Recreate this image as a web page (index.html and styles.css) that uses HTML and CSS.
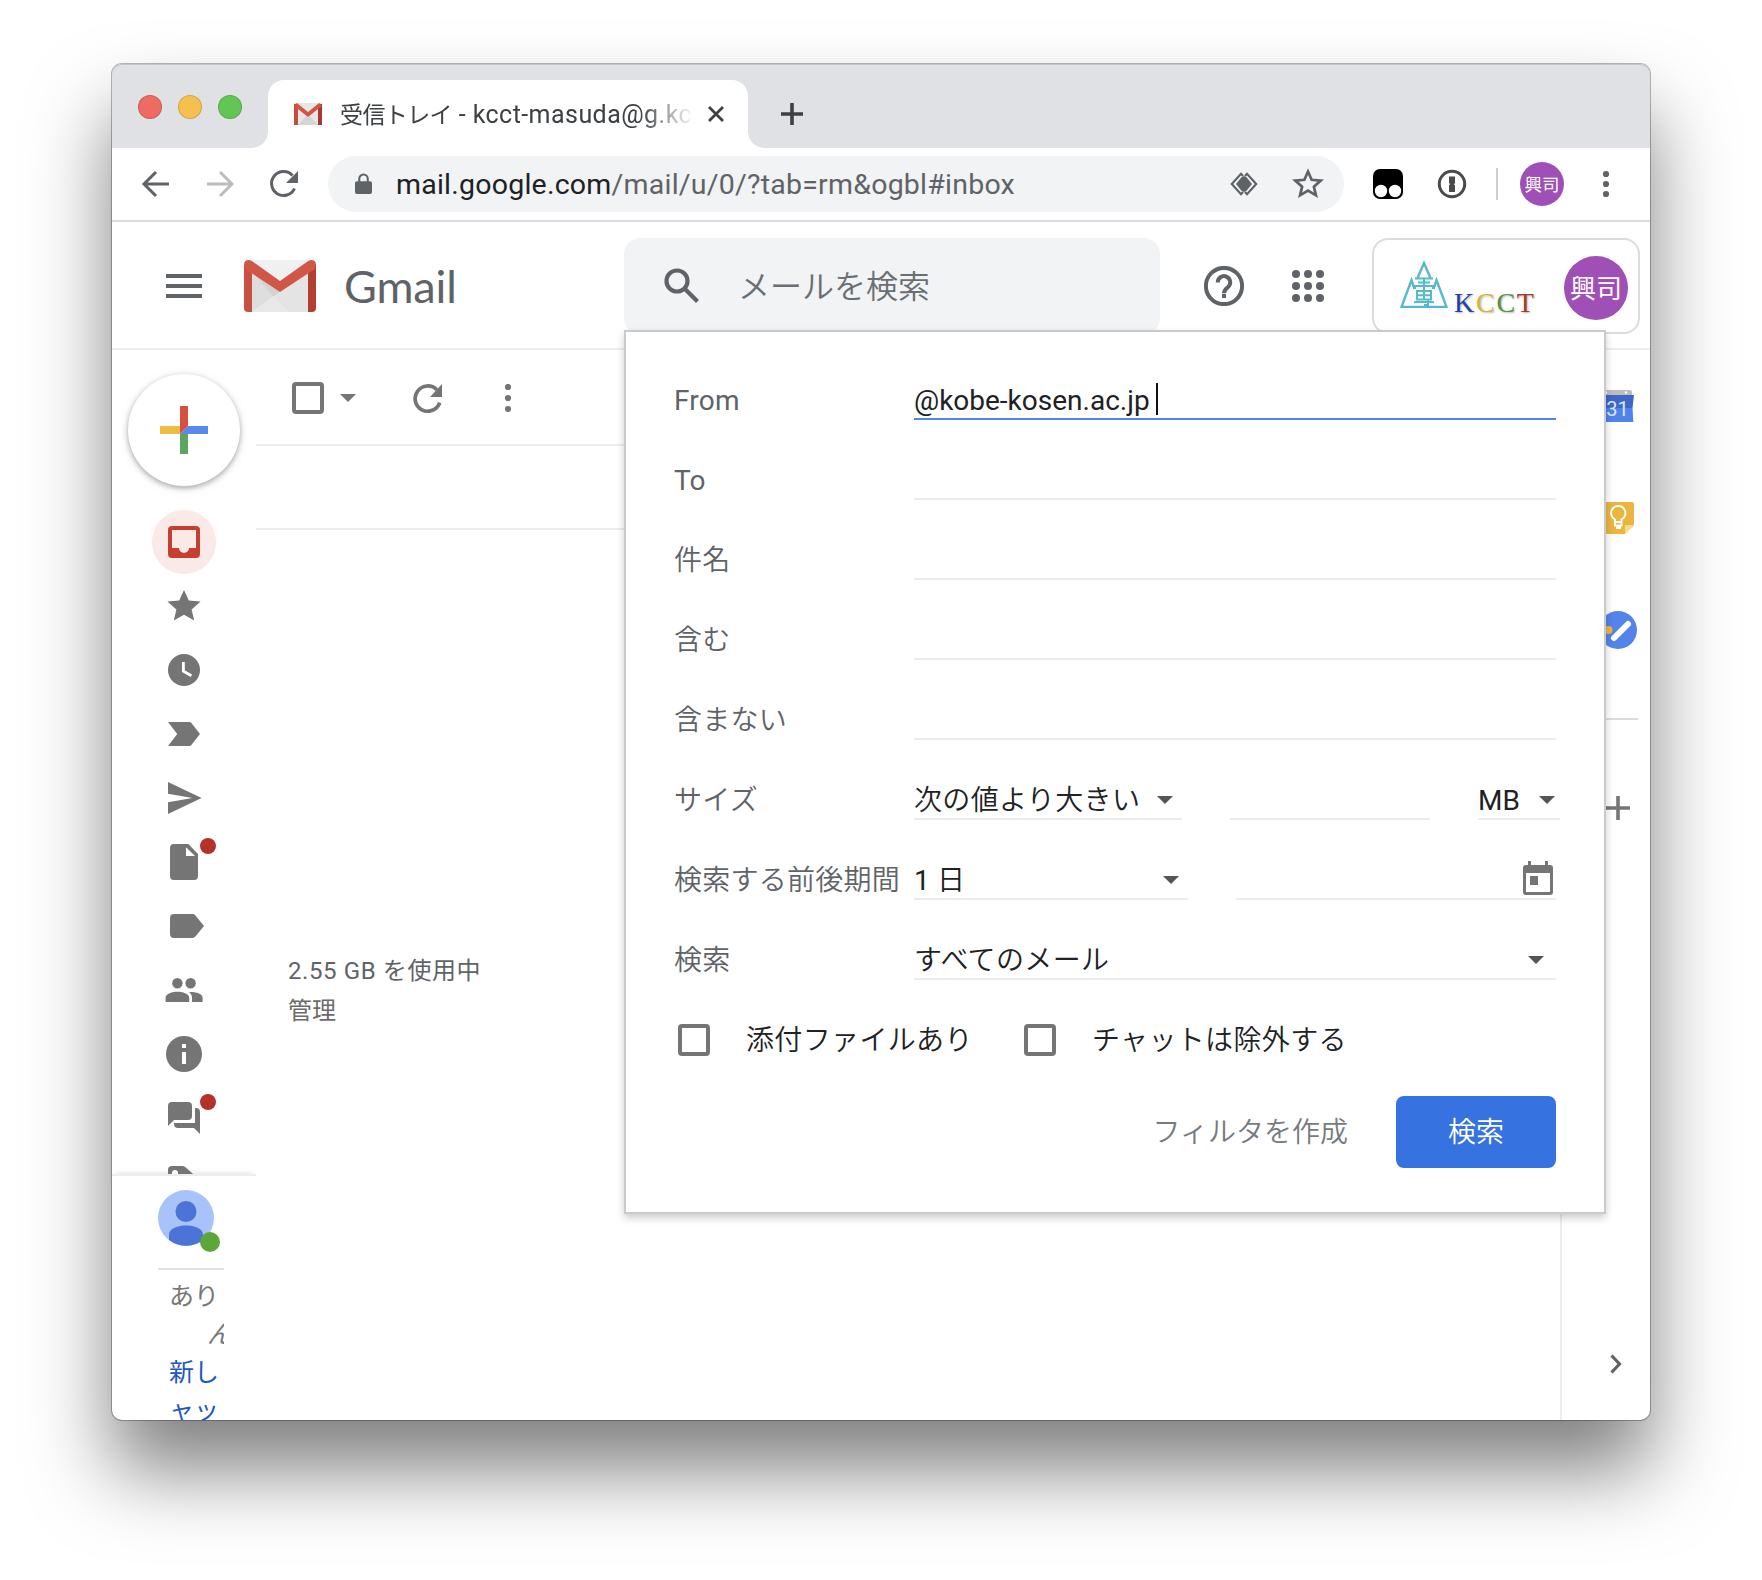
FILE: index.html
```html
<!DOCTYPE html>
<html lang="ja">
<head>
<meta charset="utf-8">
<title>受信トレイ - Gmail</title>
<link rel="stylesheet" href="styles.css">
</head>
<body>
<div class="window">
  <div class="tabstrip">
    <div class="lights"><span class="light red"></span><span class="light yellow"></span><span class="light green"></span></div>
    <div class="tab">
      <svg class="favicon" viewBox="0 0 28 22"><path fill="#e6e6e6" d="M0 0h28v22H0z"/><path fill="#d5d5d5" d="M4 22 14 11l10 11z"/><path fill="#c54d3f" d="M0 1h4v21H0z"/><path fill="#a63a2e" d="M24 1h4v21h-4z"/><path fill="none" stroke="#d35446" stroke-width="4" d="M1.500 1.500 14 11.500 26.500 1.500"/></svg>
      <span class="tab-title"><span class="ja">受信トレイ</span> - kcct-masuda@g.kc</span>
      <svg class="tab-close" viewBox="0 0 18 18"><path d="M2 2l14 14M16 2 2 16"/></svg>
    </div>
    <svg class="new-tab" viewBox="0 0 24 24"><path d="M12 1v22M1 12h22"/></svg>
  </div>
  <div class="toolbar">
    <svg class="nav" viewBox="0 0 32 32"><path d="M29 16H5M16 4 4 16l12 12"/></svg>
    <svg class="nav off" viewBox="0 0 32 32"><path d="M3 16h24M16 4l12 12-12 12"/></svg>
    <svg class="nav" viewBox="0 0 32 32"><path d="M26.500 20.500A12 12 0 1 1 24.500 7.500"/><path class="solid" d="M30 3v12H18z"/></svg>
    <div class="omnibox">
      <svg class="lock" viewBox="0 0 18 24"><path fill="#5f6368" d="M2 8.500h14q2 0 2 2V20q0 2-2 2H2q-2 0-2-2v-9.500q0-2 2-2z"/><path fill="none" stroke="#5f6368" stroke-width="2.200" d="M4.500 9V6a4.500 4.500 0 0 1 9 0v3"/></svg>
      <span class="url">mail.google.com<span class="path">/mail/u/0/?tab=rm&amp;ogbl#inbox</span></span>
      <svg class="diamond" viewBox="0 0 28 24"><path fill="none" stroke="#5f6368" stroke-width="2.200" d="m13 4-2-2.200L1.800 12l9.200 10.200 2-2.200M15 4l2-2.200L26.200 12 17 22.200 15 20"/><path fill="#5f6368" d="M11.500 5.200 14 4l2.500 1.200L22 12l-5.500 6.800L14 20l-2.500-1.200L6 12z"/></svg>
      <svg class="bookmark" viewBox="0 0 30 30"><path d="m15 4 3.200 7.300 8 .7-6 5.300 1.800 7.700-7-4.100L8 25l1.800-7.700-6-5.300 8-.7z"/></svg>
    </div>
    <svg class="ext-a" viewBox="0 0 30 30"><rect width="30" height="30" rx="7"/><circle cx="8" cy="22" r="6.200" fill="#fff"/><circle cx="22" cy="22" r="6.200" fill="#fff"/></svg>
    <svg class="ext-b" viewBox="0 0 30 30"><circle cx="15" cy="15" r="12.700" fill="none" stroke="#4a4a4a" stroke-width="3"/><path fill="#4a4a4a" d="M12 7.500h6V14l-1 1.500 1 1V23h-6v-6.500l1-1.500-1-1z"/></svg>
    <span class="divider"></span>
    <span class="avatar small">興司</span>
    <svg class="dots" viewBox="0 0 8 28"><circle cx="4" cy="4" r="3.100"/><circle cx="4" cy="14" r="3.100"/><circle cx="4" cy="24" r="3.100"/></svg>
  </div>

  <div class="app">
    <header class="header">
      <div class="burger"><i></i><i></i><i></i></div>
      <svg class="logo" viewBox="0 0 72 52"><path fill="#f0f0f0" d="M4 0h64v52H4z"/><path fill="#dedede" d="M8 12 30 36 8 52z"/><path fill="#d2d2d2" d="m8 12 28 20-6 5z"/><path fill="#e9e9e9" d="m8 52 22-16 15 16z"/><path fill="#e4e4e4" d="m36 32 28-20v40H45L30 36z"/><path fill="#c65143" d="M0 5h8v47H4q-4 0-4-4z"/><path fill="#b23f30" d="M64 5h8v43q0 4-4 4h-4z"/><path fill="#d15647" d="M0 5Q0 0 5 0q2 0 3.500 1.500L36 21 63.500 1.500Q65 0 67 0q5 0 5 5 0 3-2 4.500L36 32 2 9.500Q0 8 0 5z"/></svg>
      <span class="brand">Gmail</span>
      <div class="searchbox">
        <svg viewBox="0 0 36 36"><circle cx="13" cy="13" r="10.500"/><path d="m20.500 20.500 13 13"/></svg>
        <span class="ja">メールを検索</span>
      </div>
      <svg class="help" viewBox="0 0 40 40"><circle cx="20" cy="20" r="18.100"/><path d="M13.800 16.500a6.200 6.200 0 1 1 10.500 4.300C21.600 23 20 24 20 27.200"/><path d="M20 28v4"/></svg>
      <svg class="apps" viewBox="0 0 32 32"><circle cx="4" cy="4" r="4"/><circle cx="16" cy="4" r="4"/><circle cx="28" cy="4" r="4"/><circle cx="4" cy="16" r="4"/><circle cx="16" cy="16" r="4"/><circle cx="28" cy="16" r="4"/><circle cx="4" cy="28" r="4"/><circle cx="16" cy="28" r="4"/><circle cx="28" cy="28" r="4"/></svg>
      <div class="account">
        <svg class="school" viewBox="0 0 48 48"><path d="M17.500 18 24 3l6.500 15M14.500 29 11.500 20 1.500 47h45l-10-27-3 9"/><path class="mark" d="M15 18.500h18M18 22.500h12M15 29v-3h18v3M17 31h14v8.500H17zM24 19v21M17 35.200h14M14 42h20M28 40v5h-4"/></svg>
        <span class="kcct"><b class="k1">K</b><b class="k2">C</b><b class="k3">C</b><b class="k4">T</b></span>
        <span class="avatar large">興司</span>
      </div>
    </header>

    <div class="content">
      <nav class="rail">
        <div class="compose"><svg viewBox="0 0 48 48"><path fill="#edbd43" d="M0 20h20v8H0z"/><path fill="#5a88ed" d="M20 28l8-8h20v8z"/><path fill="#5ba55e" d="M20 28h8v20h-8z"/><path fill="#d5513f" d="M20 0h8v20l-8 8z"/></svg></div>
        <div class="labels">
          <div class="item active"><svg viewBox="0 0 20 20"><path fill-rule="evenodd" d="M4 2h12a2 2 0 0 1 2 2v12a2 2 0 0 1-2 2H4a2 2 0 0 1-2-2V4a2 2 0 0 1 2-2zm0 2v9h3.500a2.500 2.500 0 0 0 5 0H16V4z"/></svg></div>
          <div class="item"><svg viewBox="0 0 20 20"><path d="m10 2 2.400 5.300 5.900.4-4.500 4 1.300 5.600-5.100-2.900-5.100 2.900 1.300-5.600-4.500-4 5.900-.4z"/></svg></div>
          <div class="item"><svg viewBox="0 0 20 20"><circle cx="10" cy="10" r="8"/><path fill="none" stroke="#fff" stroke-width="1.400" d="M9.700 6v4.600l4 2.300"/></svg></div>
          <div class="item"><svg viewBox="0 0 20 20"><path d="M2 4h10.600q.7 0 1.100.5L18 10l-4.300 5.500q-.4.500-1.100.5H2l4.600-6z"/></svg></div>
          <div class="item"><svg viewBox="0 0 20 20"><path d="m2 2 16.800 8L2 18v-5.900L14.200 10 2 7.900z"/></svg></div>
          <div class="item"><svg viewBox="0 0 20 20"><path d="M5 1h7.200L17 6v11a2 2 0 0 1-2 2H5a2 2 0 0 1-2-2V3a2 2 0 0 1 2-2z"/><path fill="#fff" d="M11 2.600V7h4.500z"/></svg><span class="dot"></span></div>
          <div class="item"><svg viewBox="0 0 20 20"><path d="M5 4h9.300q.9 0 1.400.7L20 10l-4.300 5.300q-.5.700-1.400.7H5a2 2 0 0 1-2-2V6a2 2 0 0 1 2-2z"/></svg></div>
          <div class="item"><svg viewBox="0 0 20 20"><circle cx="6.700" cy="6.600" r="2.600"/><circle cx="13.300" cy="6.600" r="2.600"/><path d="M.8 16v-2.200c0-2 3.500-2.900 5.900-2.900s5.900.9 5.900 2.900V16zM14 16v-2.200c0-1.200-.6-2.100-1.500-2.800 3-.3 6.800.8 6.800 2.800V16z"/></svg></div>
          <div class="item"><svg viewBox="0 0 20 20"><circle cx="10" cy="10" r="9"/><path fill="#fff" d="M9 5h2v2H9zM9 9h2v6H9z"/></svg></div>
          <div class="item"><svg viewBox="0 0 20 20"><path d="M4 2h8a2 2 0 0 1 2 2v5a2 2 0 0 1-2 2H5l-3 3V4a2 2 0 0 1 2-2z"/><path d="M15.500 5h.5a2 2 0 0 1 2 2v11l-3-3H7a2 2 0 0 1-2-2v-.5h10.500z"/></svg><span class="dot"></span></div>
          <div class="item"><svg viewBox="0 0 20 20"><path d="M4 2h5.200q.8 0 1.400.5L18 9l-8 9-8-8V4a2 2 0 0 1 2-2z"/><circle cx="5.500" cy="5.500" r="1.500" fill="#fff"/></svg></div>
        </div>
        <div class="hangouts">
          <div class="presence">
            <svg viewBox="0 0 56 56"><circle cx="28" cy="28" r="28" fill="#a8c3fa"/><circle cx="28" cy="21.500" r="10.500" fill="#4c73d6"/><path fill="#4c73d6" d="M11 50V45c0-7 9-9.500 17-9.500S45 38 45 45v5a28 28 0 0 1-34 0z"/></svg>
            <span class="online"></span>
          </div>
          <div class="chat">
            <p>あり</p>
            <p class="cut">ん</p>
            <p class="link">新し</p>
            <p class="link">ャッ</p>
          </div>
        </div>
      </nav>

      <main class="main">
        <div class="actions">
          <span class="check"></span>
          <span class="caret grey"></span>
          <svg class="refresh" viewBox="0 0 28 28"><path fill="none" stroke="#757575" stroke-width="3.600" d="M25.800 18A12.200 12.200 0 1 1 23 5.600"/><path fill="#757575" d="M28 0v12.500H16.500z"/></svg>
          <svg class="more" viewBox="0 0 8 28"><circle cx="4" cy="3" r="3.100"/><circle cx="4" cy="14" r="3.100"/><circle cx="4" cy="25" r="3.100"/></svg>
        </div>
        <div class="blank"></div>
        <div class="usage"><p>2.55 GB <span class="ja">を使用中</span></p><p class="manage ja">管理</p></div>
      </main>

      <aside class="side">
        <svg class="cal" viewBox="0 0 32 32"><path fill="#bdbdbd" d="M2 0h26q2 0 2 2v4H0V2q0-2 2-2z"/><circle cx="4" cy="2.500" r="1.200" fill="#fff"/><circle cx="24" cy="2.500" r="1.200" fill="#fff"/><path fill="#3f66c9" d="M0 5h32l-1.500 13H0z"/><path fill="#4f82ea" d="M0 18h30.500l.8 14H0z"/><text x="15.500" y="25.500" text-anchor="middle">31</text></svg>
        <svg class="keep" viewBox="0 0 32 32"><path fill="#eab640" d="M0 0h30q2 0 2 2v21l-9 9H0z"/><path fill="#f7dc8c" d="M23 23h9l-9 9z"/><path fill="none" stroke="#fff" stroke-width="1.900" d="M13 20v-2.500a7.200 7.200 0 1 1 6.500 0V20zM13 20h6.500v3.500H13z"/><path fill="#fff" d="M14 24h5v3h-5z"/></svg>
        <svg class="tasks" viewBox="0 0 38 38"><circle cx="19" cy="19" r="19" fill="#5484ea"/><circle cx="9.500" cy="19" r="4" fill="#eab640"/><path stroke="#fff" stroke-width="6" stroke-linecap="round" d="M15 27 29 13"/></svg>
        <span class="rule"></span>
        <svg class="plus" viewBox="0 0 24 24"><path d="M12 0v24M0 12h24"/></svg>
        <svg class="chevron" viewBox="0 0 12 20"><path d="m1.500 1.500 8 8.500-8 8.500"/></svg>
      </aside>
    </div>

    <form class="filter">
      <div class="row"><label>From</label><div class="field focus">@kobe-kosen.ac.jp<i class="cursor"></i></div></div>
      <div class="row"><label>To</label><div class="field"></div></div>
      <div class="row"><label class="ja">件名</label><div class="field"></div></div>
      <div class="row"><label class="ja">含む</label><div class="field"></div></div>
      <div class="row"><label class="ja">含まない</label><div class="field"></div></div>
      <div class="row"><label class="ja">サイズ</label>
        <div class="field select size-op"><span class="ja">次の値より大きい</span><span class="caret"></span></div>
        <div class="field size-value"></div>
        <div class="field select size-unit"><span class="latin">MB</span><span class="caret"></span></div>
      </div>
      <div class="row"><label class="ja">検索する前後期間</label>
        <div class="field select span-op"><span class="days">1 <span class="ja">日</span></span><span class="caret"></span></div>
        <div class="field date"><svg viewBox="0 0 30 34"><path fill-rule="evenodd" d="M5 0h3v4h14V0h3v4h2q3 0 3 3v24q0 3-3 3H3q-3 0-3-3V7q0-3 3-3h2zM3 12v19h24V12z"/><path d="M7 15h8v9H7z"/></svg></div>
      </div>
      <div class="row"><label class="ja">検索</label><div class="field select all"><span class="ja">すべてのメール</span><span class="caret"></span></div></div>
      <div class="row checks">
        <span class="check"></span><span class="attach ja">添付ファイルあり</span>
        <span class="check"></span><span class="chats ja">チャットは除外する</span>
      </div>
      <div class="buttons"><span class="create ja">フィルタを作成</span><button type="button" class="ja">検索</button></div>
    </form>
  </div>
</div>
</body>
</html>
```
FILE: styles.css
```css
* { box-sizing: border-box; }
body {
  margin: 0;
  width: 1762px;
  height: 1580px;
  padding: 64px 112px 0;
  overflow: hidden;
  background: #fff;
  font-family: Roboto, "Noto Sans CJK JP", sans-serif;
  color: #202124;
}
svg { display: block; flex: none; }
p { margin: 0; }
.ja { font-family: "Noto Sans CJK JP", sans-serif; font-weight: 350; }
.window {
  width: 1538px;
  height: 1356px;
  display: flex;
  flex-direction: column;
  border-radius: 10px;
  background: #fff;
  box-shadow: 0 0 0 1px rgba(0,0,0,.28), 0 50px 80px rgba(0,0,0,.5);
}

/* browser chrome */
.tabstrip {
  height: 84px;
  flex: none;
  display: flex;
  align-items: flex-start;
  background: #dfe1e5;
  border-radius: 10px 10px 0 0;
  box-shadow: inset 0 1px 0 #c4c5c8;
}
.lights { display: flex; gap: 16px; padding: 31px 26px 0; width: 156px; flex: none; }
.light { width: 24px; height: 24px; border-radius: 50%; border: 1px solid rgba(0,0,0,.14); flex: none; }
.red { background: #ed6b60; }
.yellow { background: #f5c04f; }
.green { background: #62c655; }
.tab {
  position: relative;
  width: 480px;
  height: 68px;
  margin-top: 16px;
  padding: 0 22px 0 26px;
  display: flex;
  align-items: center;
  background: #fff;
  border-radius: 16px 16px 0 0;
}
.tab::before, .tab::after {
  content: "";
  position: absolute;
  bottom: 0;
  width: 16px;
  height: 16px;
}
.tab::before { left: -16px; background: radial-gradient(circle at 0 0, transparent 15.500px, #fff 16px); }
.tab::after { right: -16px; background: radial-gradient(circle at 100% 0, transparent 15.500px, #fff 16px); }
.favicon { width: 28px; height: 22px; margin-right: 18px; }
.tab-title {
  width: 352px;
  overflow: hidden;
  white-space: nowrap;
  font-size: 25px;
  line-height: 34px;
  padding-bottom: 1px;
  letter-spacing: .45px;
  color: #3c4043;
  -webkit-mask-image: linear-gradient(90deg, #000 300px, transparent 354px);
  mask-image: linear-gradient(90deg, #000 300px, transparent 354px);
}
.tab-title .ja { font-size: 23px; letter-spacing: -.6px; font-weight: 400; }
.tab-close { width: 18px; height: 18px; margin-left: 15px; fill: none; stroke: #3c4043; stroke-width: 2.800; }
.new-tab { width: 24px; height: 24px; margin: 38px 0 0 32px; fill: none; stroke: #3c4043; stroke-width: 3.600; }
.toolbar {
  height: 74px;
  flex: none;
  display: flex;
  align-items: center;
  padding-left: 28px;
  border-bottom: 2px solid #dadce0;
}
.nav { width: 32px; height: 32px; margin-right: 32px; fill: none; stroke: #5f6368; stroke-width: 3; }
.nav.off { stroke: #babcbe; }
.nav .solid { fill: #5f6368; stroke: none; }
.omnibox {
  width: 1016px;
  height: 56px;
  margin-left: -4px;
  display: flex;
  align-items: center;
  border-radius: 28px;
  background: #f1f3f4;
}
.lock { width: 17px; height: 23px; margin-left: 27px; }
.url { margin-left: 24px; width: 808px; padding-top: 1px; font-size: 28.500px; line-height: 40px; letter-spacing: .23px; white-space: nowrap; }
.path { color: #5f6368; }
.diamond { width: 28px; height: 24px; margin-left: 26px; }
.bookmark { width: 34px; height: 34px; margin-left: 33px; fill: none; stroke: #5f6368; stroke-width: 2.400; }
.ext-a { width: 30px; height: 30px; margin-left: 29px; }
.ext-b { width: 30px; height: 30px; margin-left: 34px; }
.divider { width: 2px; height: 32px; margin: 0 22px 0 29px; background: #cdcfd2; }
.avatar {
  display: flex;
  align-items: center;
  justify-content: center;
  flex: none;
  border-radius: 50%;
  background: #9f4fb5;
  color: #fff;
}
.avatar.small { width: 44px; height: 44px; font-size: 17.500px; padding-bottom: 2px; }
.avatar.large { width: 64px; height: 64px; margin-top: 2px; font-size: 26px; padding-bottom: 3px; }
.dots { width: 8px; height: 28px; margin-left: 38px; fill: #5f6368; }

/* mail application */
.app { position: relative; flex: 1; min-height: 0; display: flex; flex-direction: column; }
.header {
  height: 128px;
  flex: none;
  display: flex;
  align-items: flex-start;
  padding-top: 16px;
  border-bottom: 2px solid #ededed;
}
.burger { width: 36px; margin: 36px 0 0 54px; display: flex; flex-direction: column; gap: 6px; }
.burger i { height: 4px; background: #5f6368; }
.logo { width: 72px; height: 52px; margin: 22px 0 0 42px; }
.brand {
  width: 115px;
  margin: 20px 0 0 28px;
  font: 45px/56px Lato, sans-serif;
  letter-spacing: -.1px;
  color: #5f6368;
}
.searchbox {
  width: 536px;
  height: 96px;
  margin-left: 165px;
  padding-left: 40px;
  display: flex;
  align-items: center;
  gap: 38px;
  border-radius: 16px;
  background: #f1f3f4;
  font-size: 32px;
  color: #6a6e72;
}
.searchbox span { padding-bottom: 5px; }
.searchbox svg { width: 36px; height: 36px; fill: none; stroke: #5f6368; stroke-width: 4.200; }
.help { width: 40px; height: 40px; margin: 28px 0 0 44px; fill: none; stroke: #5f6368; stroke-width: 4; }
.apps { width: 32px; height: 32px; margin: 32px 0 0 48px; fill: #5f6368; }
.account {
  width: 268px;
  height: 96px;
  margin-left: 48px;
  padding: 2px 10px 0 26px;
  display: flex;
  align-items: center;
  border: 2px solid #dadce0;
  border-radius: 16px;
}
.school { width: 48px; height: 48px; margin-top: -7px; fill: none; stroke: #55b9d2; stroke-width: 2.400; }
.school .mark { stroke-width: 2; }
.kcct {
  display: flex;
  justify-content: space-between;
  width: 80px;
  margin: 31px 30px 0 6px;
  font: 28px/30px "Liberation Serif", serif;
  text-shadow: 1px 1px 2px rgba(0,0,0,.3);
}
.kcct b { font-weight: 400; }
.k1 { color: #2341a5; }
.k2 { color: #d8b62c; }
.k3 { color: #4f9641; }
.k4 { color: #a33c24; }

.content { flex: 1; min-height: 0; display: flex; }
.rail { width: 144px; display: flex; flex-direction: column; align-items: center; padding-top: 24px; }
.compose {
  width: 112px;
  height: 112px;
  flex: none;
  display: grid;
  place-items: center;
  border-radius: 50%;
  box-shadow: 0 2px 4px rgba(60,64,67,.3), 0 2px 6px 2px rgba(60,64,67,.15);
}
.compose svg { width: 48px; height: 48px; }
.labels { width: 144px; height: 664px; flex: none; margin-top: 24px; overflow: hidden; display: flex; flex-direction: column; align-items: center; }
.item { position: relative; width: 64px; height: 64px; flex: none; display: grid; place-items: center; border-radius: 50%; }
.item svg { width: 40px; height: 40px; fill: #757575; }
.item.active { background: #f9e9e7; }
.item.active svg { fill: #c53e30; }
.dot { position: absolute; top: 8px; right: 0; width: 16px; height: 16px; border-radius: 50%; background: #b3332a; }
.hangouts {
  width: 144px;
  height: 246px;
  flex: none;
  padding: 14px 32px 0 46px;
  overflow: hidden;
  border-top: 2px solid #ececec;
  border-bottom-left-radius: 10px;
  box-shadow: 0 -5px 5px -4px rgba(0,0,0,.12);
}
.presence { position: relative; height: 80px; border-bottom: 2px solid #e2e2e2; }
.presence svg { width: 56px; height: 56px; }
.online { position: absolute; left: 42px; top: 42px; width: 20px; height: 20px; border-radius: 50%; background: #5da639; }
.chat { padding: 8px 0 0 11px; font-size: 25px; line-height: 38px; color: #777; white-space: nowrap; }
.chat .cut { padding-left: 38px; font-style: italic; width: 55px; overflow: hidden; }
.chat .link { color: #1f57c3; }

.main { flex: 1; }
.actions { height: 96px; display: flex; align-items: center; padding: 2px 0 0 36px; border-bottom: 2px solid #ededed; }
.check { width: 32px; height: 32px; flex: none; border: 4px solid #757575; border-radius: 4px; }
.caret { width: 0; height: 0; flex: none; border: 8px solid transparent; border-top: 8px solid #555; border-bottom: 0; margin-top: 2px; }
.caret.grey { border-top-color: #757575; margin: 0 0 0 16px; }
.refresh { width: 29px; height: 29px; margin-left: 57px; }
.more { width: 8px; height: 28px; margin-left: 62px; fill: #757575; }
.blank { height: 84px; border-bottom: 2px solid #ededed; }
.usage { padding: 419px 0 0 32px; font-size: 24px; line-height: 40px; color: #5f6368; }
.usage p { height: 40px; }
.usage p:first-child { letter-spacing: .6px; }
.usage .ja { font-weight: 400; }
.manage { color: #6b6b6b; }
.side { width: 90px; display: flex; flex-direction: column; align-items: center; padding: 40px 0 0 24px; border-left: 2px solid #ededed; }
.side > * { flex: none; }
.cal { width: 32px; height: 32px; }
.cal text { font: 20px Roboto, sans-serif; fill: #dfe6f8; }
.keep { width: 32px; height: 32px; margin-top: 80px; }
.tasks { width: 38px; height: 38px; margin-top: 77px; }
.rule { width: 40px; height: 2px; margin-top: 69px; background: #dadce0; }
.plus { width: 24px; height: 24px; margin-top: 76px; stroke: #757575; stroke-width: 3.600; }
.chevron { width: 12px; height: 20px; margin-top: 534px; margin-right: 4px; fill: none; stroke: #5f6368; stroke-width: 3.200; }

/* search options lie over the mail view */
.filter {
  position: absolute;
  left: 512px;
  top: 108px;
  width: 982px;
  height: 884px;
  padding: 8px 48px 0;
  background: #fff;
  border: 2px solid #c9cacc;
  box-shadow: 0 4px 8px rgba(0,0,0,.2);
  font-size: 28px;
}
.row { height: 80px; display: flex; align-items: flex-end; }
.row label { width: 240px; height: 39px; flex: none; line-height: 40px; letter-spacing: .25px; white-space: nowrap; color: #5f6368; }
.row label.ja { height: 42px; }
.field {
  width: 642px;
  height: 40px;
  flex: none;
  display: flex;
  align-items: center;
  border-bottom: 2px solid #ececec;
  white-space: nowrap;
}
.field.focus { border-bottom-color: #5484ea; padding-top: 2px; }
.cursor { width: 2px; height: 32px; margin: -2px 0 0 6px; background: #111; }
.select { justify-content: space-between; letter-spacing: .15px; }
.select > .ja { letter-spacing: .35px; padding-bottom: 3px; }
.days { padding-bottom: 2px; }
.latin { padding-top: 2px; }
.size-op { width: 268px; padding-right: 9px; }
.size-value { width: 200px; margin-left: 48px; }
.size-unit { width: 82px; margin-left: 48px; padding-right: 5px; }
.span-op { width: 274px; padding-right: 9px; }
.date { width: 320px; margin-left: 48px; justify-content: flex-end; padding-right: 3px; }
.date svg { width: 30px; height: 34px; margin-top: -2px; fill: #757575; }
.all { padding-right: 12px; }
.checks { height: 104px; align-items: center; padding: 16px 0 0 4px; letter-spacing: .35px; }
.checks span + span { margin-left: 36px; }
.checks .ja { padding-bottom: 4px; }
.checks .attach { width: 242px; }
.buttons { width: 882px; display: flex; justify-content: flex-end; align-items: center; gap: 48px; margin-top: 12px; }
.create { color: #777b80; padding-bottom: 4px; }
button {
  width: 160px;
  height: 72px;
  padding: 0 0 4px;
  border: 0;
  border-radius: 8px;
  background: #3672e0;
  color: #fff;
  font-size: 28px;
}
```
